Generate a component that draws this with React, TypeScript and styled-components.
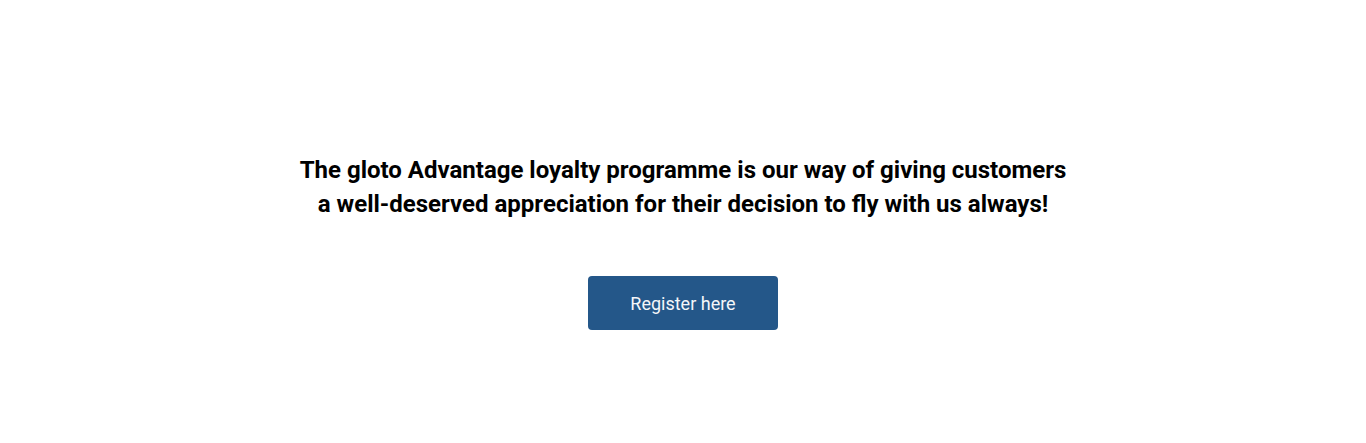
import React from "react";
import styled, { createGlobalStyle } from "styled-components";

const Global = createGlobalStyle`
  html, body { margin: 0; padding: 0; background: #ffffff; }
  body { font-family: Roboto, "Noto Sans", sans-serif; }
`;

const Section = styled.section`
  height: 443px;
  display: flex;
  flex-direction: column;
  align-items: center;
  padding-top: 153px;
  box-sizing: border-box;
`;

const Lead = styled.h2`
  margin: 0;
  font-family: Roboto, sans-serif;
  font-weight: 700;
  font-size: 24px;
  line-height: 34px;
  color: #000000;
  text-align: center;
`;

const Button = styled.button`
  margin-top: 55px;
  width: 190px;
  height: 54px;
  border: none;
  border-radius: 4px;
  background: #245789;
  color: #f4f6f9;
  font-family: Roboto, sans-serif;
  font-size: 18px;
  font-weight: 400;
  cursor: pointer;
`;

export default function App() {
  return (
    <>
      <Global />
      <Section>
        <Lead>
          The gloto Advantage loyalty programme is our way of giving customers
          <br />
          a well-deserved appreciation for their decision to fly with us always!
        </Lead>
        <Button>Register here</Button>
      </Section>
    </>
  );
}
